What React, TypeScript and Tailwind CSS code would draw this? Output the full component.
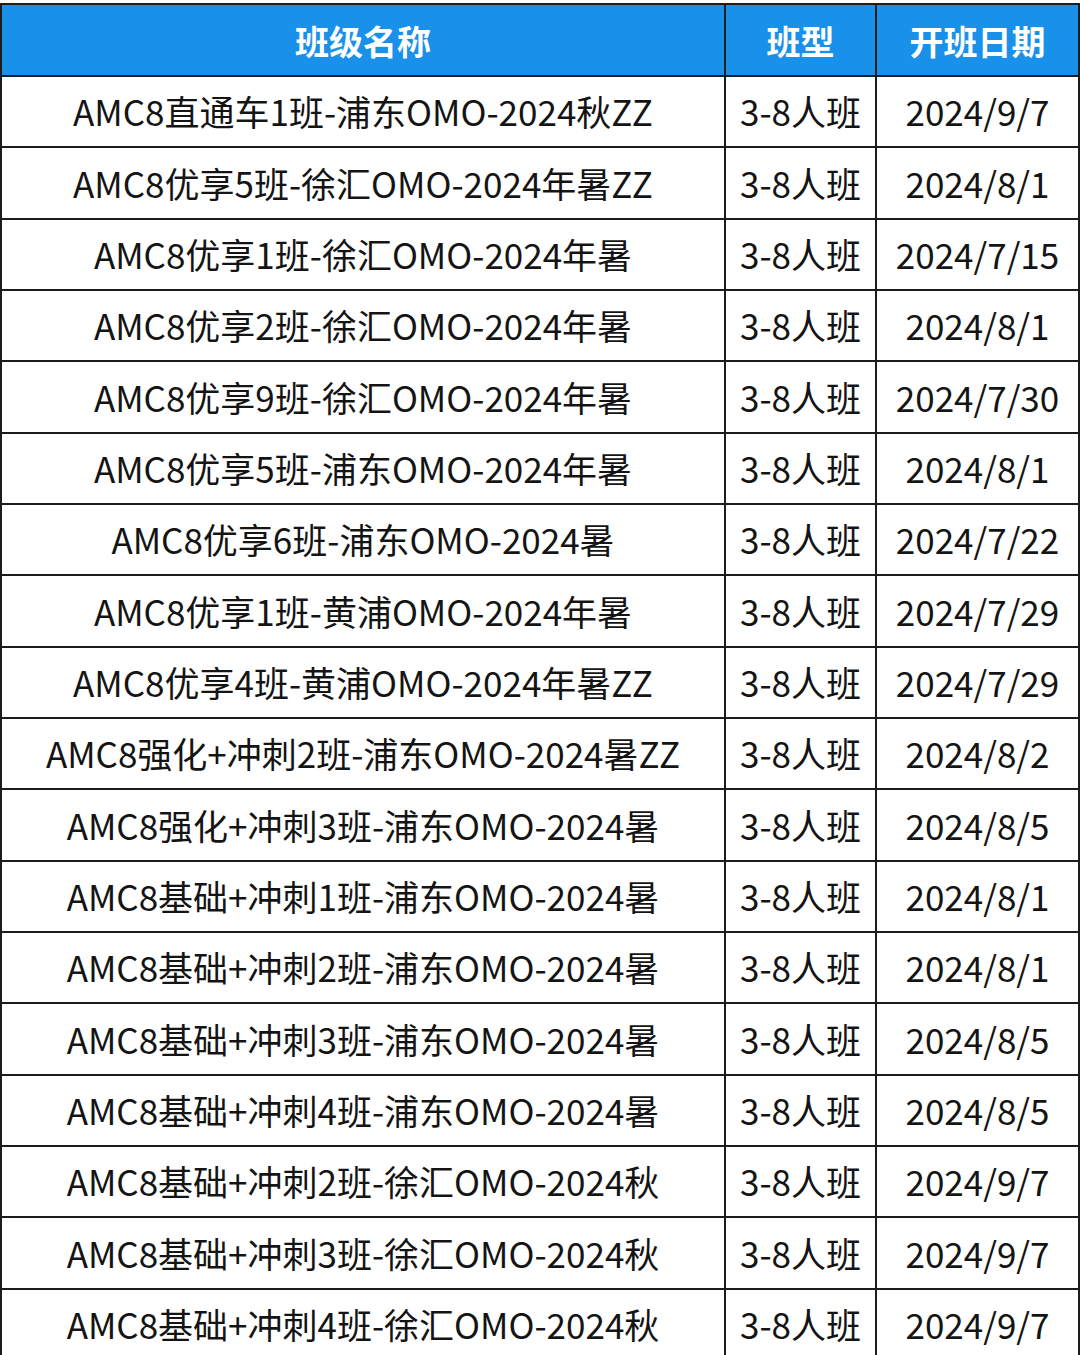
import React from "react";

type Row = { name: string; type: string; date: string };

const rows: Row[] = [
  { name: "AMC8直通车1班-浦东OMO-2024秋ZZ", type: "3-8人班", date: "2024/9/7" },
  { name: "AMC8优享5班-徐汇OMO-2024年暑ZZ", type: "3-8人班", date: "2024/8/1" },
  { name: "AMC8优享1班-徐汇OMO-2024年暑", type: "3-8人班", date: "2024/7/15" },
  { name: "AMC8优享2班-徐汇OMO-2024年暑", type: "3-8人班", date: "2024/8/1" },
  { name: "AMC8优享9班-徐汇OMO-2024年暑", type: "3-8人班", date: "2024/7/30" },
  { name: "AMC8优享5班-浦东OMO-2024年暑", type: "3-8人班", date: "2024/8/1" },
  { name: "AMC8优享6班-浦东OMO-2024暑", type: "3-8人班", date: "2024/7/22" },
  { name: "AMC8优享1班-黄浦OMO-2024年暑", type: "3-8人班", date: "2024/7/29" },
  { name: "AMC8优享4班-黄浦OMO-2024年暑ZZ", type: "3-8人班", date: "2024/7/29" },
  { name: "AMC8强化+冲刺2班-浦东OMO-2024暑ZZ", type: "3-8人班", date: "2024/8/2" },
  { name: "AMC8强化+冲刺3班-浦东OMO-2024暑", type: "3-8人班", date: "2024/8/5" },
  { name: "AMC8基础+冲刺1班-浦东OMO-2024暑", type: "3-8人班", date: "2024/8/1" },
  { name: "AMC8基础+冲刺2班-浦东OMO-2024暑", type: "3-8人班", date: "2024/8/1" },
  { name: "AMC8基础+冲刺3班-浦东OMO-2024暑", type: "3-8人班", date: "2024/8/5" },
  { name: "AMC8基础+冲刺4班-浦东OMO-2024暑", type: "3-8人班", date: "2024/8/5" },
  { name: "AMC8基础+冲刺2班-徐汇OMO-2024秋", type: "3-8人班", date: "2024/9/7" },
  { name: "AMC8基础+冲刺3班-徐汇OMO-2024秋", type: "3-8人班", date: "2024/9/7" },
  { name: "AMC8基础+冲刺4班-徐汇OMO-2024秋", type: "3-8人班", date: "2024/9/7" },
];

const headCell =
  "h-[72px] flex items-center justify-center border-r-2 border-b-2 border-[#1c1c1c] bg-[#1991ea] text-white font-bold text-[34px]";
const bodyCell =
  "h-[71.33px] flex items-center justify-center border-r-2 border-b-2 border-[#1c1c1c] bg-white text-[#141414] text-[35px] whitespace-nowrap";

export default function App() {
  return (
    <div className="w-[1080px] h-[1355px] overflow-hidden bg-white pt-[3px] font-['Noto_Sans_CJK_SC','Noto_Sans',sans-serif]">
      <div className="grid grid-cols-[724px_151px_1fr] border-t-2 border-l-2 border-[#1c1c1c] w-[1080px]">
        {/* header */}
        <div className={headCell}>班级名称</div>
        <div className={headCell}>班型</div>
        <div className={headCell}>开班日期</div>

        {rows.map((r, i) => (
          <React.Fragment key={i}>
            <div className={bodyCell}>{r.name}</div>
            <div className={bodyCell}>{r.type}</div>
            <div className={bodyCell}>{r.date}</div>
          </React.Fragment>
        ))}
      </div>
    </div>
  );
}
